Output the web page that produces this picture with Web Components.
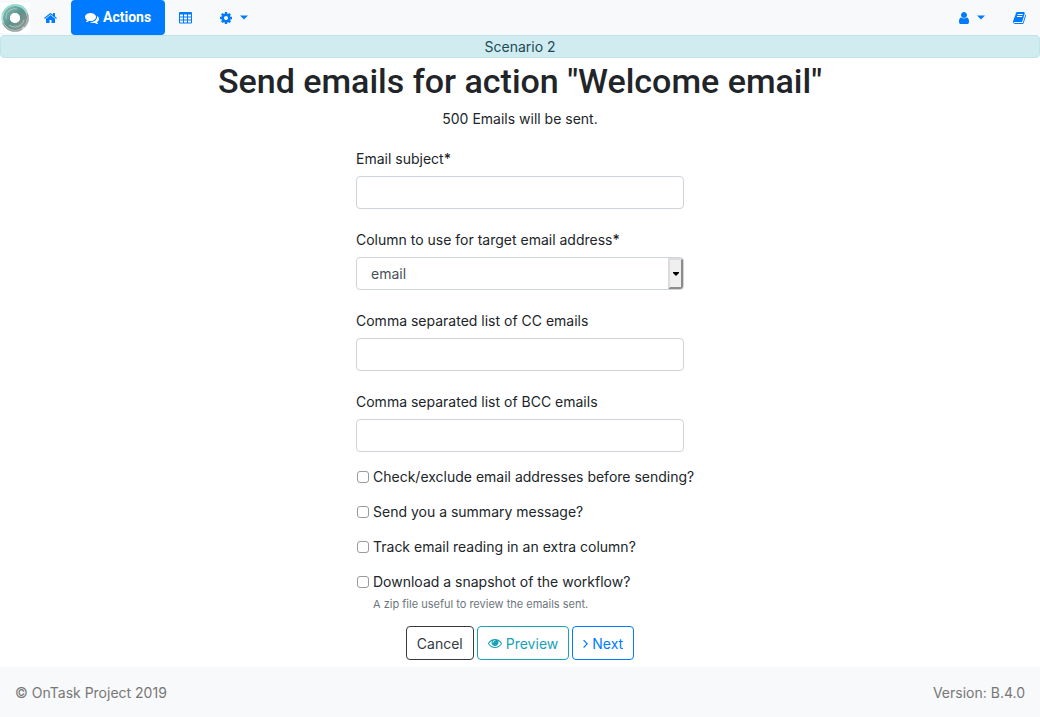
<!DOCTYPE html>
<html lang="en">
<head>
<meta charset="utf-8">
<meta name="viewport" content="width=device-width, initial-scale=1">
<title>OnTask: Send emails</title>
<style>
body { margin: 0; background: #fff; color: #212529; font: 14px/21px Inter, "Liberation Sans", sans-serif; }
</style>
</head>
<body>
<ot-page>
  <ot-navbar slot="nav"></ot-navbar>
  <ot-banner slot="nav">Scenario 2</ot-banner>
  <ot-heading>Send emails for action "Welcome email"<span slot="lead">500 Emails will be sent.</span></ot-heading>
  <ot-email-form></ot-email-form>
  <ot-footer slot="footer">© OnTask Project 2019<span slot="version">Version: B.4.0</span></ot-footer>
</ot-page>

<script>
const view = (name, html) => customElements.define(name, class extends HTMLElement {
  constructor() {
    super();
    this.attachShadow({ mode: "open" }).innerHTML = html;
  }
});

/* Icons: [viewBox, markup] */
const ICONS = {
  home: ["64 0 1664 1792", `<path d="M1472 992v480q0 26-19 45t-45 19h-384v-384h-256v384h-384q-26 0-45-19t-19-45v-480q0-1 .5-3t.5-3l575-474 575 474q1 2 1 6zm223-69l-62 74q-8 9-21 11h-3q-13 0-21-7l-692-577-692 577q-12 8-24 7-13-2-21-11l-62-74q-8-10-7-23.500t11-21.500l719-599q32-26 76-26t76 26l244 204v-195q0-14 9-23t23-9h192q14 0 23 9t9 23v408l219 182q10 8 11 21.500t-7 23.500z"/>`],
  comments: ["0 0 1792 1792", `<path d="M1408 768q0 139-94 257t-256.500 186.500-353.500 68.500q-86 0-176-16-124 88-278 128-36 9-86 16h-3q-11 0-20.500-8t-11.500-21q-1-3-1-6.500t.5-6.500 2-6l2.500-5t3.500-5.500 4-5 4.500-5 4-4.500q5-6 23-25t26-29.500 22.500-29 25-38.500 20.500-44q-124-72-195-177t-71-224q0-139 94-257t256.500-186.500 353.500-68.500 353.500 68.500 256.500 186.500 94 257zm384 256q0 120-71 224.500t-195 176.500q10 24 20.500 44t25 38.500 22.500 29 26 29.500 23 25q1 1 4 4.500t4.500 5 4 5 3.500 5.500l2.500 5t2 6 .5 6.500-1 6.500q-3 14-13 22t-22 7q-50-7-86-16-154-40-278-128-90 16-176 16-271 0-472-132 58 4 88 4 161 0 309-45t264-129q125-92 192-212t67-254q0-77-23-152 129 71 204 178t75 230z"/>`],
  table: ["0 0 13 14", `<path fill-rule="evenodd" d="M1 1h11Q13 1 13 2v9.500Q13 12.500 12 12.500H1Q0 12.500 0 11.500V2Q0 1 1 1zM1 3.500v2h3v-2zM5 3.500v2h3v-2zM9 3.500v2h3v-2zM1 6.500v2h3v-2zM5 6.500v2h3v-2zM9 6.500v2h3v-2zM1 9.500v2h3v-2zM5 9.500v2h3v-2zM9 9.500v2h3v-2z"/>`],
  cog: ["128 0 1536 1792", `<path d="M1152 896q0-106-75-181t-181-75-181 75-75 181 75 181 181 75 181-75 75-181zm512-109v222q0 12-8 23t-20 13l-185 28q-19 54-39 91 35 50 107 138 10 12 10 25t-9 23q-27 37-99 108t-94 71q-12 0-26-9l-138-108q-44 23-91 38-16 136-29 186-7 28-36 28h-222q-14 0-24.500-8.500t-11.500-21.500l-28-184q-49-16-90-37l-141 107q-10 9-25 9-14 0-25-11-126-114-165-168-7-10-7-23 0-12 8-23 15-21 51-66.500t54-70.500q-27-50-41-99l-183-27q-13-2-21-12.500t-8-23.500v-222q0-12 8-23t19-13l186-28q14-46 39-92-40-57-107-138-10-12-10-24 0-10 9-23 26-36 98.500-107.500t94.500-71.500q13 0 26 10l138 107q44-23 91-38 16-136 29-186 7-28 36-28h222q14 0 24.500 8.500t11.500 21.500l28 184q49 16 90 37l142-107q9-9 24-9 13 0 25 10 129 119 165 170 7 8 7 22 0 12-8 23-15 21-51 66.500t-54 70.500q26 50 41 98l183 28q13 2 21 12.500t8 23.500z"/>`],
  user: ["256 0 1280 1792", `<path d="M1536 1399q0 109-62.500 187t-150.500 78h-854q-88 0-150.500-78t-62.500-187q0-85 8.500-160.500t31.500-152 58.500-131 94-89 134.500-34.500q131 128 313 128t313-128q76 0 134.500 34.500t94 89 58.500 131 31.500 152 8.500 160.500zm-256-887q0 159-112.500 271.500t-271.500 112.500-271.500-112.500-112.500-271.500 112.500-271.500 271.500-112.500 271.500 112.500 112.500 271.500z"/>`],
  book: ["64 0 1664 1792", `<path d="M1703 478q40 57 18 129l-275 906q-19 64-76.500 107.500t-122.500 43.500h-923q-77 0-148.500-53.500t-99.500-131.500q-24-67-2-127 0-4 3-27t4-37q1-8-3-21.500t-3-19.500q2-11 8-21t16.500-23.500 16.500-23.500q23-38 45-91.500t30-91.500q3-10 .5-30t-.5-28q3-11 17-28t17-23q21-36 42-92t25-90q1-9-2.500-32t.5-28q4-13 22-30.500t22-22.500q19-26 42.500-84.500t27.500-96.500q1-8-3-25.500t-2-26.500q2-8 9-18t18-23 17-21q8-12 16.500-30.500t15-35 16-36 19.500-32 26.500-23.500 36-11.500 47.500 5.500l-1 3q38-9 51-9h761q74 0 114 56t18 130l-274 906q-36 119-71.500 153.500t-128.500 34.500h-869q-27 0-38 15-11 16-1 43 24 70 144 70h923q29 0 56-15.500t35-41.500l300-987q7-22 5-57 38 15 59 43zm-1064 2q-4 13 2 22.500t20 9.500h608q13 0 25.500-9.500t16.500-22.500l21-64q4-13-2-22.500t-20-9.500h-608q-13 0-25.500 9.500t-16.500 22.500zm-83 256q-4 13 2 22.500t20 9.500h608q13 0 25.500-9.500t16.500-22.500l21-64q4-13-2-22.500t-20-9.500h-608q-13 0-25.500 9.500t-16.500 22.500z"/>`],
  eye: ["0 0 1792 1792", `<path d="M1664 960q-152-236-381-353 61 104 61 225 0 185-131.500 316.500t-316.500 131.500-316.500-131.500-131.500-316.500q0-121 61-225-229 117-381 353 133 205 333.500 326.500t434.500 121.500 434.500-121.500 333.500-326.500zm-720-384q0-20-14-34t-34-14q-125 0-214.500 89.500t-89.500 214.500q0 20 14 34t34 14 34-14 14-34q0-86 61-147t147-61q20 0 34-14t14-34zm848 384q0 34-20 69-140 230-376.500 368.500t-499.500 138.500-499.500-139-376.500-368q-20-35-20-69t20-69q140-229 376.500-368t499.500-139 499.500 139 376.500 368q20 35 20 69z"/>`],
  angle: ["0 0 5 14", `<path d="M.6 4.100 4.200 7.800.6 11.500" fill="none" stroke="currentColor" stroke-width="1.200"/>`],
  caret: ["0 0 8 14", `<path d="M0 4.500h8L4 8.500z"/>`],
  arrow: ["0 0 6 14", `<path d="M0 5h6v1L3 9 0 6z"/>`]
};

customElements.define("ot-icon", class extends HTMLElement {
  constructor() {
    super();
    this.attachShadow({ mode: "open" });
  }
  connectedCallback() {
    const [box, markup] = ICONS[this.getAttribute("name")];
    this.shadowRoot.innerHTML = `<style>
      :host { display: inline-flex; flex: none; }
      svg { height: 14px; width: auto; fill: currentColor; display: block; }
    </style><svg viewBox="${box}" aria-hidden="true">${markup}</svg>`;
  }
});

view("ot-page", `<style>
  :host { display: flex; flex-direction: column; min-height: 100vh; }
  main { flex: 1; padding-bottom: 7px; }
</style>
<header><slot name="nav"></slot></header>
<main><slot></slot></main>
<slot name="footer"></slot>`);

view("ot-logo", `<style>
  :host { display: block; width: 30px; height: 30px; background: #fff; }
  svg { display: block; width: 100%; height: 100%; }
</style>
<svg viewBox="0 0 30 30" role="img" aria-label="OnTask">
  <defs>
    <linearGradient id="ring" x1="0" y1="0" x2="1" y2="1">
      <stop offset="0" stop-color="#7fb5ae"/><stop offset=".5" stop-color="#5b928b"/><stop offset="1" stop-color="#8e9391"/>
    </linearGradient>
  </defs>
  <circle cx="15" cy="15" r="13" fill="#dcefec" stroke="#a4e0d4" stroke-width="1.500"/>
  <circle cx="15" cy="15" r="8.500" fill="none" stroke="url(#ring)" stroke-width="7"/>
  <path d="M3 20A13 13 0 0 0 22 26M27 10A13 13 0 0 1 24 24" fill="none" stroke="#a6a3a3" stroke-width="1.500"/>
  <path d="M6 16A9 9 0 0 1 17 6M9 22A9.500 9.500 0 0 0 24 17" fill="none" stroke="#a9c9c4" stroke-width="1"/>
  <path d="M3 11A13 13 0 0 1 17 2Q24 3 27 9" fill="none" stroke="#8cdccb" stroke-width="1.300"/>
  <circle cx="15" cy="15" r="5" fill="#fff"/>
</svg>`);

view("ot-nav-link", `<style>
  :host { display: block; }
  a { display: flex; align-items: center; gap: 8px; height: 35px; padding: 0 14px; border-radius: 4px; color: #007bff; text-decoration: none; }
  :host([active]) a { gap: 4px; background: #007bff; color: #fff; font-family: Roboto, sans-serif; font-weight: 700; }
</style><a href="#"><slot></slot></a>`);

view("ot-navbar", `<style>
  :host { display: block; background: #f8f9fa; }
  nav { display: flex; align-items: center; }
  .user { margin-left: auto; }
</style>
<nav aria-label="Main">
  <ot-logo></ot-logo>
  <ot-nav-link><ot-icon name="home"></ot-icon></ot-nav-link>
  <ot-nav-link active><ot-icon name="comments"></ot-icon>Actions</ot-nav-link>
  <ot-nav-link><ot-icon name="table"></ot-icon></ot-nav-link>
  <ot-nav-link><ot-icon name="cog"></ot-icon><ot-icon name="caret"></ot-icon></ot-nav-link>
  <ot-nav-link class="user"><ot-icon name="user"></ot-icon><ot-icon name="caret"></ot-icon></ot-nav-link>
  <ot-nav-link><ot-icon name="book"></ot-icon></ot-nav-link>
</nav>`);

view("ot-banner", `<style>
  :host { display: block; border: 1px solid #bee5eb; border-radius: 4px; background: #d1ecf1; color: #1b4b54; text-align: center; }
</style><slot></slot>`);

view("ot-heading", `<style>
  :host { display: block; text-align: center; }
  h1 { margin: 0 0 4px; font-family: Roboto, sans-serif; font-size: 34px; line-height: 46px; font-weight: 500; }
  p { margin: 0 0 19px; }
</style><h1><slot></slot></h1><p><slot name="lead"></slot></p>`);

/* Labelled text box or drop-down */
customElements.define("ot-field", class extends HTMLElement {
  constructor() {
    super();
    this.attachShadow({ mode: "open" });
  }
  connectedCallback() {
    const options = this.getAttribute("options");
    const star = this.hasAttribute("required") ? "<b>*</b>" : "";
    const control = options
      ? `<div class="pick"><select id="control">${options.split(",").map(o => `<option>${o}</option>`).join("")}</select><span class="arrow"><ot-icon name="arrow"></ot-icon></span></div>`
      : `<input id="control" type="text">`;
    this.shadowRoot.innerHTML = `<style>
      :host { display: block; }
      label { display: block; margin-bottom: 7px; }
      b { font-weight: 500; }
      input, select { display: block; box-sizing: border-box; width: 100%; height: 33px; margin: 0; padding: 0 14px; border: 1px solid #ced4da; border-radius: 4px; background: #fff; color: #495057; font: inherit; appearance: none; }
      .pick { position: relative; }
      .arrow { position: absolute; top: 1px; right: 1px; bottom: 1px; width: 15px; box-sizing: border-box; display: flex; align-items: center; justify-content: center; background: #efefef; border: 2px solid; border-color: #dcdcdc #8c8c8c #8c8c8c #dcdcdc; border-radius: 0 3px 3px 0; color: #000; pointer-events: none; }
    </style><label for="control">${this.getAttribute("label")}${star}</label>${control}`;
  }
});

view("ot-check", `<style>
  :host { display: block; }
  label { display: flex; align-items: center; gap: 4px; white-space: nowrap; }
  input { flex: none; box-sizing: border-box; width: 12px; height: 12px; margin: 0 0 0 1px; appearance: none; border: 1px solid #9a9a9a; border-radius: 3px; background: #fff; }
  input:checked { background: #007bff; }
  small { display: block; padding-left: 17px; font-size: 11px; line-height: 16px; color: #6c757d; }
  ::slotted([slot="help"]) { display: block; margin-top: 4px; }
</style><label><input type="checkbox"><span><slot></slot></span></label><small><slot name="help"></slot></small>`);

view("ot-button", `<style>
  :host { display: block; color: #343a40; }
  :host([kind="info"]) { color: #17a2b8; }
  :host([kind="primary"]) { color: #007bff; }
  button { display: flex; align-items: center; gap: 4px; height: 34px; padding: 0 10px; border: 1px solid currentColor; border-radius: 4px; background: #fff; color: inherit; font: inherit; }
</style><button type="button"><slot></slot></button>`);

view("ot-email-form", `<style>
  :host { display: block; }
  form { max-width: 328px; margin: 0 auto; }
  .fields { display: grid; gap: 20px; margin-bottom: 14px; }
  .checks { display: grid; gap: 14px; }
  .actions { display: flex; justify-content: center; gap: 3px; margin-top: 14px; }
</style>
<form>
  <div class="fields">
    <ot-field label="Email subject" required></ot-field>
    <ot-field label="Column to use for target email address" required options="email"></ot-field>
    <ot-field label="Comma separated list of CC emails"></ot-field>
    <ot-field label="Comma separated list of BCC emails"></ot-field>
  </div>
  <div class="checks">
    <ot-check>Check/exclude email addresses before sending?</ot-check>
    <ot-check>Send you a summary message?</ot-check>
    <ot-check>Track email reading in an extra column?</ot-check>
    <ot-check>Download a snapshot of the workflow?<span slot="help">A zip file useful to review the emails sent.</span></ot-check>
  </div>
  <div class="actions">
    <ot-button>Cancel</ot-button>
    <ot-button kind="info"><ot-icon name="eye"></ot-icon>Preview</ot-button>
    <ot-button kind="primary"><ot-icon name="angle"></ot-icon>Next</ot-button>
  </div>
</form>`);

view("ot-footer", `<style>
  :host { display: block; background: #f8f9fa; color: #777; }
  footer { display: flex; align-items: center; justify-content: space-between; min-height: 50px; padding: 0 15px; }
</style><footer><span><slot></slot></span><span><slot name="version"></slot></span></footer>`);
</script>
</body>
</html>
